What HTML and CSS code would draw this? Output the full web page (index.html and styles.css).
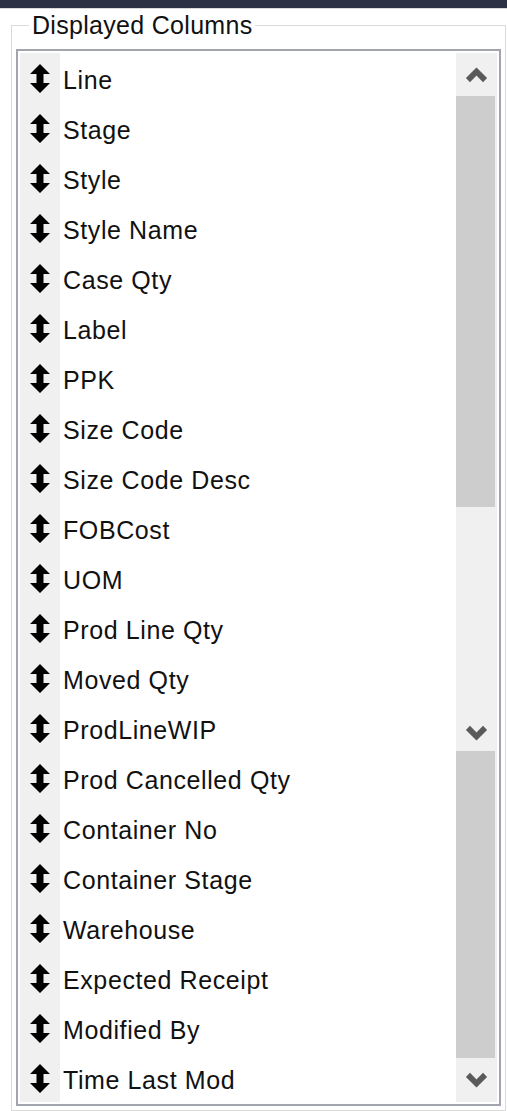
FILE: index.html
```html
<!DOCTYPE html>
<html lang="en">
<head>
<meta charset="utf-8">
<title>Displayed Columns</title>
<link rel="stylesheet" href="styles.css">
</head>
<body>
<div class="topbar"></div>
<fieldset class="group">
  <legend class="group-title">Displayed Columns</legend>
  <div class="listbox">
    <ul class="items">
      <li class="item"><span class="grip"><svg viewBox="0 0 20 29"><path d="M10 0 L20 10 L13.5 10 L13.5 19 L20 19 L10 29 L0 19 L6.5 19 L6.5 10 L0 10 Z"/></svg></span><span class="label">Line</span></li>
      <li class="item"><span class="grip"><svg viewBox="0 0 20 29"><path d="M10 0 L20 10 L13.5 10 L13.5 19 L20 19 L10 29 L0 19 L6.5 19 L6.5 10 L0 10 Z"/></svg></span><span class="label">Stage</span></li>
      <li class="item"><span class="grip"><svg viewBox="0 0 20 29"><path d="M10 0 L20 10 L13.5 10 L13.5 19 L20 19 L10 29 L0 19 L6.5 19 L6.5 10 L0 10 Z"/></svg></span><span class="label">Style</span></li>
      <li class="item"><span class="grip"><svg viewBox="0 0 20 29"><path d="M10 0 L20 10 L13.5 10 L13.5 19 L20 19 L10 29 L0 19 L6.5 19 L6.5 10 L0 10 Z"/></svg></span><span class="label">Style Name</span></li>
      <li class="item"><span class="grip"><svg viewBox="0 0 20 29"><path d="M10 0 L20 10 L13.5 10 L13.5 19 L20 19 L10 29 L0 19 L6.5 19 L6.5 10 L0 10 Z"/></svg></span><span class="label">Case Qty</span></li>
      <li class="item"><span class="grip"><svg viewBox="0 0 20 29"><path d="M10 0 L20 10 L13.5 10 L13.5 19 L20 19 L10 29 L0 19 L6.5 19 L6.5 10 L0 10 Z"/></svg></span><span class="label">Label</span></li>
      <li class="item"><span class="grip"><svg viewBox="0 0 20 29"><path d="M10 0 L20 10 L13.5 10 L13.5 19 L20 19 L10 29 L0 19 L6.5 19 L6.5 10 L0 10 Z"/></svg></span><span class="label">PPK</span></li>
      <li class="item"><span class="grip"><svg viewBox="0 0 20 29"><path d="M10 0 L20 10 L13.5 10 L13.5 19 L20 19 L10 29 L0 19 L6.5 19 L6.5 10 L0 10 Z"/></svg></span><span class="label">Size Code</span></li>
      <li class="item"><span class="grip"><svg viewBox="0 0 20 29"><path d="M10 0 L20 10 L13.5 10 L13.5 19 L20 19 L10 29 L0 19 L6.5 19 L6.5 10 L0 10 Z"/></svg></span><span class="label">Size Code Desc</span></li>
      <li class="item"><span class="grip"><svg viewBox="0 0 20 29"><path d="M10 0 L20 10 L13.5 10 L13.5 19 L20 19 L10 29 L0 19 L6.5 19 L6.5 10 L0 10 Z"/></svg></span><span class="label">FOBCost</span></li>
      <li class="item"><span class="grip"><svg viewBox="0 0 20 29"><path d="M10 0 L20 10 L13.5 10 L13.5 19 L20 19 L10 29 L0 19 L6.5 19 L6.5 10 L0 10 Z"/></svg></span><span class="label">UOM</span></li>
      <li class="item"><span class="grip"><svg viewBox="0 0 20 29"><path d="M10 0 L20 10 L13.5 10 L13.5 19 L20 19 L10 29 L0 19 L6.5 19 L6.5 10 L0 10 Z"/></svg></span><span class="label">Prod Line Qty</span></li>
      <li class="item"><span class="grip"><svg viewBox="0 0 20 29"><path d="M10 0 L20 10 L13.5 10 L13.5 19 L20 19 L10 29 L0 19 L6.5 19 L6.5 10 L0 10 Z"/></svg></span><span class="label">Moved Qty</span></li>
      <li class="item"><span class="grip"><svg viewBox="0 0 20 29"><path d="M10 0 L20 10 L13.5 10 L13.5 19 L20 19 L10 29 L0 19 L6.5 19 L6.5 10 L0 10 Z"/></svg></span><span class="label">ProdLineWIP</span></li>
      <li class="item"><span class="grip"><svg viewBox="0 0 20 29"><path d="M10 0 L20 10 L13.5 10 L13.5 19 L20 19 L10 29 L0 19 L6.5 19 L6.5 10 L0 10 Z"/></svg></span><span class="label">Prod Cancelled Qty</span></li>
      <li class="item"><span class="grip"><svg viewBox="0 0 20 29"><path d="M10 0 L20 10 L13.5 10 L13.5 19 L20 19 L10 29 L0 19 L6.5 19 L6.5 10 L0 10 Z"/></svg></span><span class="label">Container No</span></li>
      <li class="item"><span class="grip"><svg viewBox="0 0 20 29"><path d="M10 0 L20 10 L13.5 10 L13.5 19 L20 19 L10 29 L0 19 L6.5 19 L6.5 10 L0 10 Z"/></svg></span><span class="label">Container Stage</span></li>
      <li class="item"><span class="grip"><svg viewBox="0 0 20 29"><path d="M10 0 L20 10 L13.5 10 L13.5 19 L20 19 L10 29 L0 19 L6.5 19 L6.5 10 L0 10 Z"/></svg></span><span class="label">Warehouse</span></li>
      <li class="item"><span class="grip"><svg viewBox="0 0 20 29"><path d="M10 0 L20 10 L13.5 10 L13.5 19 L20 19 L10 29 L0 19 L6.5 19 L6.5 10 L0 10 Z"/></svg></span><span class="label">Expected Receipt</span></li>
      <li class="item"><span class="grip"><svg viewBox="0 0 20 29"><path d="M10 0 L20 10 L13.5 10 L13.5 19 L20 19 L10 29 L0 19 L6.5 19 L6.5 10 L0 10 Z"/></svg></span><span class="label">Modified By</span></li>
      <li class="item"><span class="grip"><svg viewBox="0 0 20 29"><path d="M10 0 L20 10 L13.5 10 L13.5 19 L20 19 L10 29 L0 19 L6.5 19 L6.5 10 L0 10 Z"/></svg></span><span class="label">Time Last Mod</span></li>
    </ul>
    <div class="scrollbar">
      <div class="sb-btn sb-up"><svg class="chev" viewBox="0 0 20 14"><polyline points="2.5,11.5 10,4 17.5,11.5"/></svg></div>
      <div class="sb-thumb sb-thumb-a"></div>
      <div class="sb-track"></div>
      <div class="sb-btn sb-down-a"><svg class="chev" viewBox="0 0 20 14"><polyline points="2.5,2.5 10,10 17.5,2.5"/></svg></div>
      <div class="sb-thumb sb-thumb-b"></div>
      <div class="sb-btn sb-down-b"><svg class="chev" viewBox="0 0 20 14"><polyline points="2.5,2.5 10,10 17.5,2.5"/></svg></div>
    </div>
  </div>
</fieldset>
</body>
</html>
```

FILE: styles.css
```css
html, body {
  margin: 0;
  padding: 0;
  background: #ffffff;
  font-family: "Liberation Sans", Arial, sans-serif;
  color: #000000;
  overflow: hidden;
}

.topbar {
  height: 8px;
  background: #2d3144;
  border-bottom: 1px solid #d9d9d9;
}

.group {
  margin: 1px 0 0 11px;
  width: 495px;
  box-sizing: border-box;
  border: 1px solid #dadada;
  padding: 9px 4px 4px 4px;
  min-width: 0;
}

.group-title {
  margin-left: 13px;
  padding: 0 3px;
  font-size: 25px;
  line-height: 30px;
  letter-spacing: 0.3px;
  color: #111111;
}

.listbox {
  display: flex;
  width: 485px;
  height: 1057px;
  box-sizing: border-box;
  border: 2px solid #a2a4ae;
  padding: 2px 2px 2px 2px;
  background: #ffffff;
}

.items {
  list-style: none;
  margin: 0;
  padding: 0;
  flex: 1;
  overflow: hidden;
  background: linear-gradient(to right, #f0f0f0 0, #f0f0f0 40px, #ffffff 40px);
}

.item {
  display: flex;
  align-items: center;
  height: 50px;
}

.grip {
  width: 40px;
  height: 50px;
  display: flex;
  align-items: center;
  justify-content: center;
  flex: none;
  background: #f0f0f0;
}

.grip svg {
  width: 20px;
  height: 29px;
  display: block;
  fill: #000000;
}

.label {
  padding-left: 3px;
  padding-top: 5px;
  font-size: 25px;
  letter-spacing: 0.6px;
  white-space: nowrap;
  color: #111111;
}

.scrollbar {
  width: 41px;
  flex: none;
  display: flex;
  flex-direction: column;
  background: #f0f0f0;
}

.sb-btn {
  display: flex;
  align-items: center;
  justify-content: center;
  background: #f0f0f0;
}

.sb-up { height: 43px; }
.sb-down-a { height: 36px; }
.sb-down-b { height: 44px; }

.sb-thumb {
  background: #cdcdcd;
  margin-right: 2px;
}

.sb-thumb-a { height: 411px; }
.sb-thumb-b { height: 307px; }

.sb-track {
  height: 208px;
  background: #f0f0f0;
}

.chev {
  width: 23px;
  height: 16px;
  display: block;
  fill: none;
  stroke: #5a5a5a;
  stroke-width: 5;
}
```
